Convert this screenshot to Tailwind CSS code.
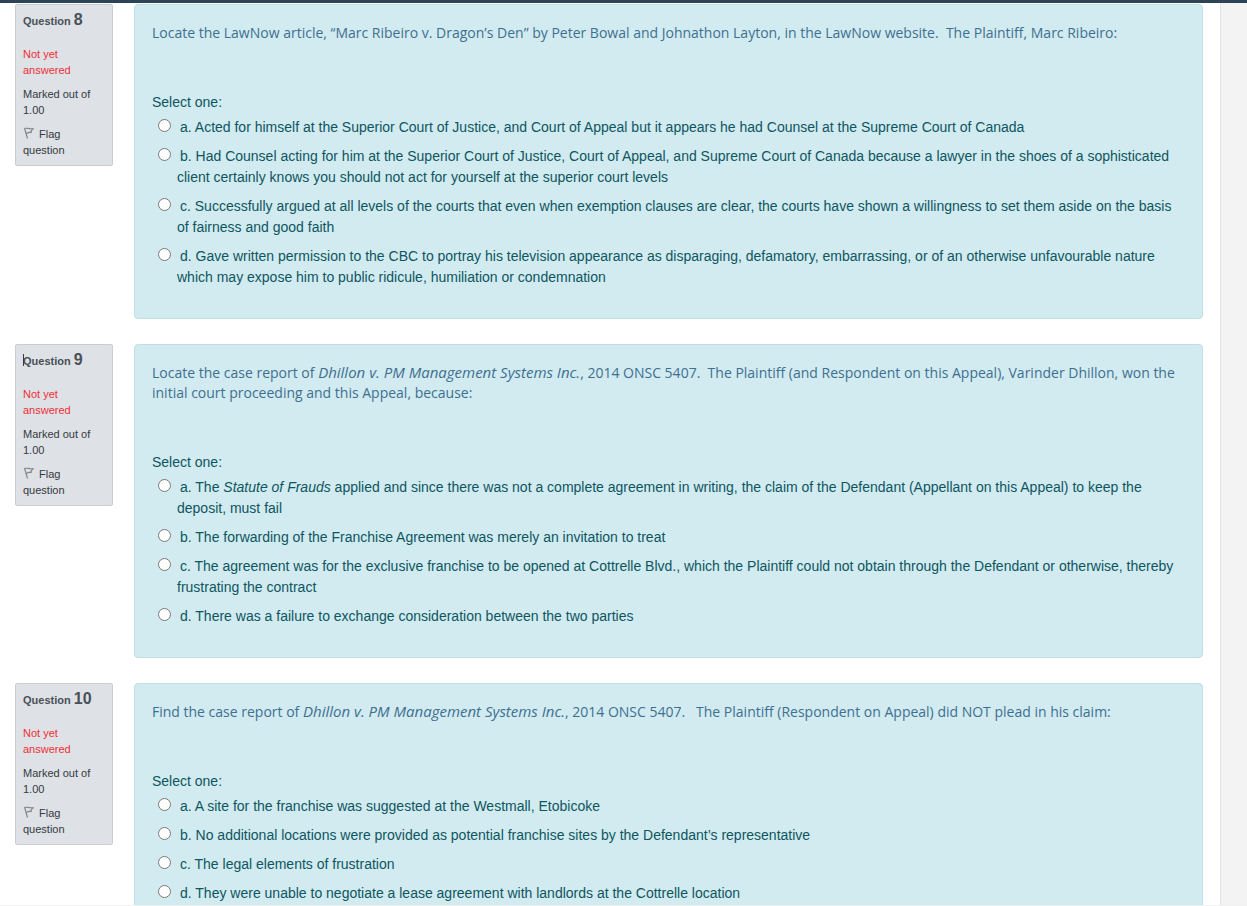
<!DOCTYPE html>
<html lang="en">
<head>
    <meta charset="UTF-8">
    <meta name="viewport" content="width=device-width, initial-scale=1.0">
    <title>Quiz</title>
    <script src="https://cdn.jsdelivr.net/npm/@tailwindcss/browser@4"></script>
</head>
<body class="h-screen overflow-hidden flex flex-col bg-white font-['Liberation_Sans',Arial,sans-serif]">

    <!-- Bottom edge of the site header -->
    <header class="h-[3px] shrink-0 bg-[#2d4356]"></header>

    <div class="flex flex-1 min-h-0 border-b border-[#f1f1f1]">
        <main class="flex-1 min-w-0 overflow-hidden pt-px pl-[15px] pr-[17px]">

            <!-- Question 8 -->
            <section class="flex items-start gap-[21px] mb-[25px]">
                <div class="w-[98px] shrink-0 flex flex-col gap-2 p-[7px] bg-[#dee1e6] border border-[#cacdd0] rounded-xs text-[11px] leading-4 text-[#343a40]">
                    <h3 class="mb-[9px] font-bold text-[#495057]">Question <span class="text-base leading-4">8</span></h3>
                    <div class="text-[#ee2f35]">Not yet answered</div>
                    <div>Marked out of 1.00</div>
                    <button type="button" class="text-left">
                        <svg class="inline-block align-[-1px] mr-1" width="12" height="12" viewBox="0 0 12 12" fill="none" stroke="#84888c" stroke-width="1.2"><path d="M1.500 1 4.500 11.500M1.500 1.500C4 .5 6 2.500 10.500 1.500 8.500 3 7.500 4 8 5.500 6 5 5 5.500 3.500 6.500" /></svg>Flag question
                    </button>
                </div>
                <div class="flex-1 min-w-0 px-[17px] pt-[18px] pb-[30px] bg-[#d1ebf0] border border-[#bee0e6] rounded text-sm leading-[21px] text-[#0f5560]">
                    <p class="mb-[49px] font-['Open_Sans',sans-serif] leading-5 text-[#3f6f90]">Locate the LawNow article, “Marc Ribeiro v. Dragon’s Den” by Peter Bowal and Johnathon Layton, in the LawNow website.&nbsp; The Plaintiff, Marc Ribeiro:</p>
                    <fieldset>
                        <legend class="mb-1">Select one:</legend>
                        <div class="flex flex-col gap-2 pl-1.5">
                            <div class="flex items-start gap-1.5">
                                <input type="radio" id="q8a" name="q8" class="size-[13px] shrink-0 mt-0.5">
                                <label for="q8a" class="indent-[3px]">a. Acted for himself at the Superior Court of Justice, and Court of Appeal but it appears he had Counsel at the Supreme Court of Canada</label>
                            </div>
                            <div class="flex items-start gap-1.5">
                                <input type="radio" id="q8b" name="q8" class="size-[13px] shrink-0 mt-0.5">
                                <label for="q8b" class="indent-[3px]">b. Had Counsel acting for him at the Superior Court of Justice, Court of Appeal, and Supreme Court of Canada because a lawyer in the shoes of a sophisticated client certainly knows you should not act for yourself at the superior court levels</label>
                            </div>
                            <div class="flex items-start gap-1.5">
                                <input type="radio" id="q8c" name="q8" class="size-[13px] shrink-0 mt-0.5">
                                <label for="q8c" class="indent-[3px]">c. Successfully argued at all levels of the courts that even when exemption clauses are clear, the courts have shown a willingness to set them aside on the basis of fairness and good faith</label>
                            </div>
                            <div class="flex items-start gap-1.5">
                                <input type="radio" id="q8d" name="q8" class="size-[13px] shrink-0 mt-0.5">
                                <label for="q8d" class="indent-[3px]">d. Gave written permission to the CBC to portray his television appearance as disparaging, defamatory, embarrassing, or of an otherwise unfavourable nature which may expose him to public ridicule, humiliation or condemnation</label>
                            </div>
                        </div>
                    </fieldset>
                </div>
            </section>

            <!-- Question 9 -->
            <section class="flex items-start gap-[21px] mb-[25px]">
                <div class="w-[98px] shrink-0 flex flex-col gap-2 p-[7px] bg-[#dee1e6] border border-[#cacdd0] rounded-xs text-[11px] leading-4 text-[#343a40]">
                    <h3 class="relative mb-[9px] font-bold text-[#495057]">
                        <span class="absolute left-0 top-0.5 w-px h-3 bg-[#343a40]"></span>Question <span class="text-base leading-4">9</span>
                    </h3>
                    <div class="text-[#ee2f35]">Not yet answered</div>
                    <div>Marked out of 1.00</div>
                    <button type="button" class="text-left">
                        <svg class="inline-block align-[-1px] mr-1" width="12" height="12" viewBox="0 0 12 12" fill="none" stroke="#84888c" stroke-width="1.2"><path d="M1.500 1 4.500 11.500M1.500 1.500C4 .5 6 2.500 10.500 1.500 8.500 3 7.500 4 8 5.500 6 5 5 5.500 3.500 6.500" /></svg>Flag question
                    </button>
                </div>
                <div class="flex-1 min-w-0 px-[17px] pt-[18px] pb-[30px] bg-[#d1ebf0] border border-[#bee0e6] rounded text-sm leading-[21px] text-[#0f5560]">
                    <p class="mb-[49px] font-['Open_Sans',sans-serif] leading-5 text-[#3f6f90]">Locate the case report of <em class="text-[15px] leading-none">Dhillon v. PM Management Systems Inc.</em>, 2014 ONSC 5407.&nbsp; The Plaintiff (and Respondent on this Appeal), Varinder Dhillon, won the initial court proceeding and this Appeal, because:</p>
                    <fieldset>
                        <legend class="mb-1">Select one:</legend>
                        <div class="flex flex-col gap-2 pl-1.5">
                            <div class="flex items-start gap-1.5">
                                <input type="radio" id="q9a" name="q9" class="size-[13px] shrink-0 mt-0.5">
                                <label for="q9a" class="indent-[3px]">a. The <em>Statute of Frauds</em> applied and since there was not a complete agreement in writing, the claim of the Defendant (Appellant on this Appeal) to keep the deposit, must fail</label>
                            </div>
                            <div class="flex items-start gap-1.5">
                                <input type="radio" id="q9b" name="q9" class="size-[13px] shrink-0 mt-0.5">
                                <label for="q9b" class="indent-[3px]">b. The forwarding of the Franchise Agreement was merely an invitation to treat</label>
                            </div>
                            <div class="flex items-start gap-1.5">
                                <input type="radio" id="q9c" name="q9" class="size-[13px] shrink-0 mt-0.5">
                                <label for="q9c" class="indent-[3px]">c. The agreement was for the exclusive franchise to be opened at Cottrelle Blvd., which the Plaintiff could not obtain through the Defendant or otherwise, thereby frustrating the contract</label>
                            </div>
                            <div class="flex items-start gap-1.5">
                                <input type="radio" id="q9d" name="q9" class="size-[13px] shrink-0 mt-0.5">
                                <label for="q9d" class="indent-[3px]">d. There was a failure to exchange consideration between the two parties</label>
                            </div>
                        </div>
                    </fieldset>
                </div>
            </section>

            <!-- Question 10 -->
            <section class="flex items-start gap-[21px] mb-[25px]">
                <div class="w-[98px] shrink-0 flex flex-col gap-2 p-[7px] bg-[#dee1e6] border border-[#cacdd0] rounded-xs text-[11px] leading-4 text-[#343a40]">
                    <h3 class="mb-[9px] font-bold text-[#495057]">Question <span class="text-base leading-4">10</span></h3>
                    <div class="text-[#ee2f35]">Not yet answered</div>
                    <div>Marked out of 1.00</div>
                    <button type="button" class="text-left">
                        <svg class="inline-block align-[-1px] mr-1" width="12" height="12" viewBox="0 0 12 12" fill="none" stroke="#84888c" stroke-width="1.2"><path d="M1.500 1 4.500 11.500M1.500 1.500C4 .5 6 2.500 10.500 1.500 8.500 3 7.500 4 8 5.500 6 5 5 5.500 3.500 6.500" /></svg>Flag question
                    </button>
                </div>
                <div class="flex-1 min-w-0 px-[17px] pt-[18px] pb-[30px] bg-[#d1ebf0] border border-[#bee0e6] rounded text-sm leading-[21px] text-[#0f5560]">
                    <p class="mb-[49px] font-['Open_Sans',sans-serif] leading-5 text-[#3f6f90]">Find the case report of <em class="text-[15px] leading-none">Dhillon v. PM Management Systems Inc.</em>, 2014 ONSC 5407.&nbsp;&nbsp; The Plaintiff (Respondent on Appeal) did NOT plead in his claim:</p>
                    <fieldset>
                        <legend class="mb-1">Select one:</legend>
                        <div class="flex flex-col gap-2 pl-1.5">
                            <div class="flex items-start gap-1.5">
                                <input type="radio" id="q10a" name="q10" class="size-[13px] shrink-0 mt-0.5">
                                <label for="q10a" class="indent-[3px]">a. A site for the franchise was suggested at the Westmall, Etobicoke</label>
                            </div>
                            <div class="flex items-start gap-1.5">
                                <input type="radio" id="q10b" name="q10" class="size-[13px] shrink-0 mt-0.5">
                                <label for="q10b" class="indent-[3px]">b. No additional locations were provided as potential franchise sites by the Defendant’s representative</label>
                            </div>
                            <div class="flex items-start gap-1.5">
                                <input type="radio" id="q10c" name="q10" class="size-[13px] shrink-0 mt-0.5">
                                <label for="q10c" class="indent-[3px]">c. The legal elements of frustration</label>
                            </div>
                            <div class="flex items-start gap-1.5">
                                <input type="radio" id="q10d" name="q10" class="size-[13px] shrink-0 mt-0.5">
                                <label for="q10d" class="indent-[3px]">d. They were unable to negotiate a lease agreement with landlords at the Cottrelle location</label>
                            </div>
                        </div>
                    </fieldset>
                </div>
            </section>
        </main>

        <!-- Right gutter -->
        <aside class="w-[27px] shrink-0 bg-[#f3f3f3] border-l border-[#e4e4e4]"></aside>
    </div>

</body>
</html>
